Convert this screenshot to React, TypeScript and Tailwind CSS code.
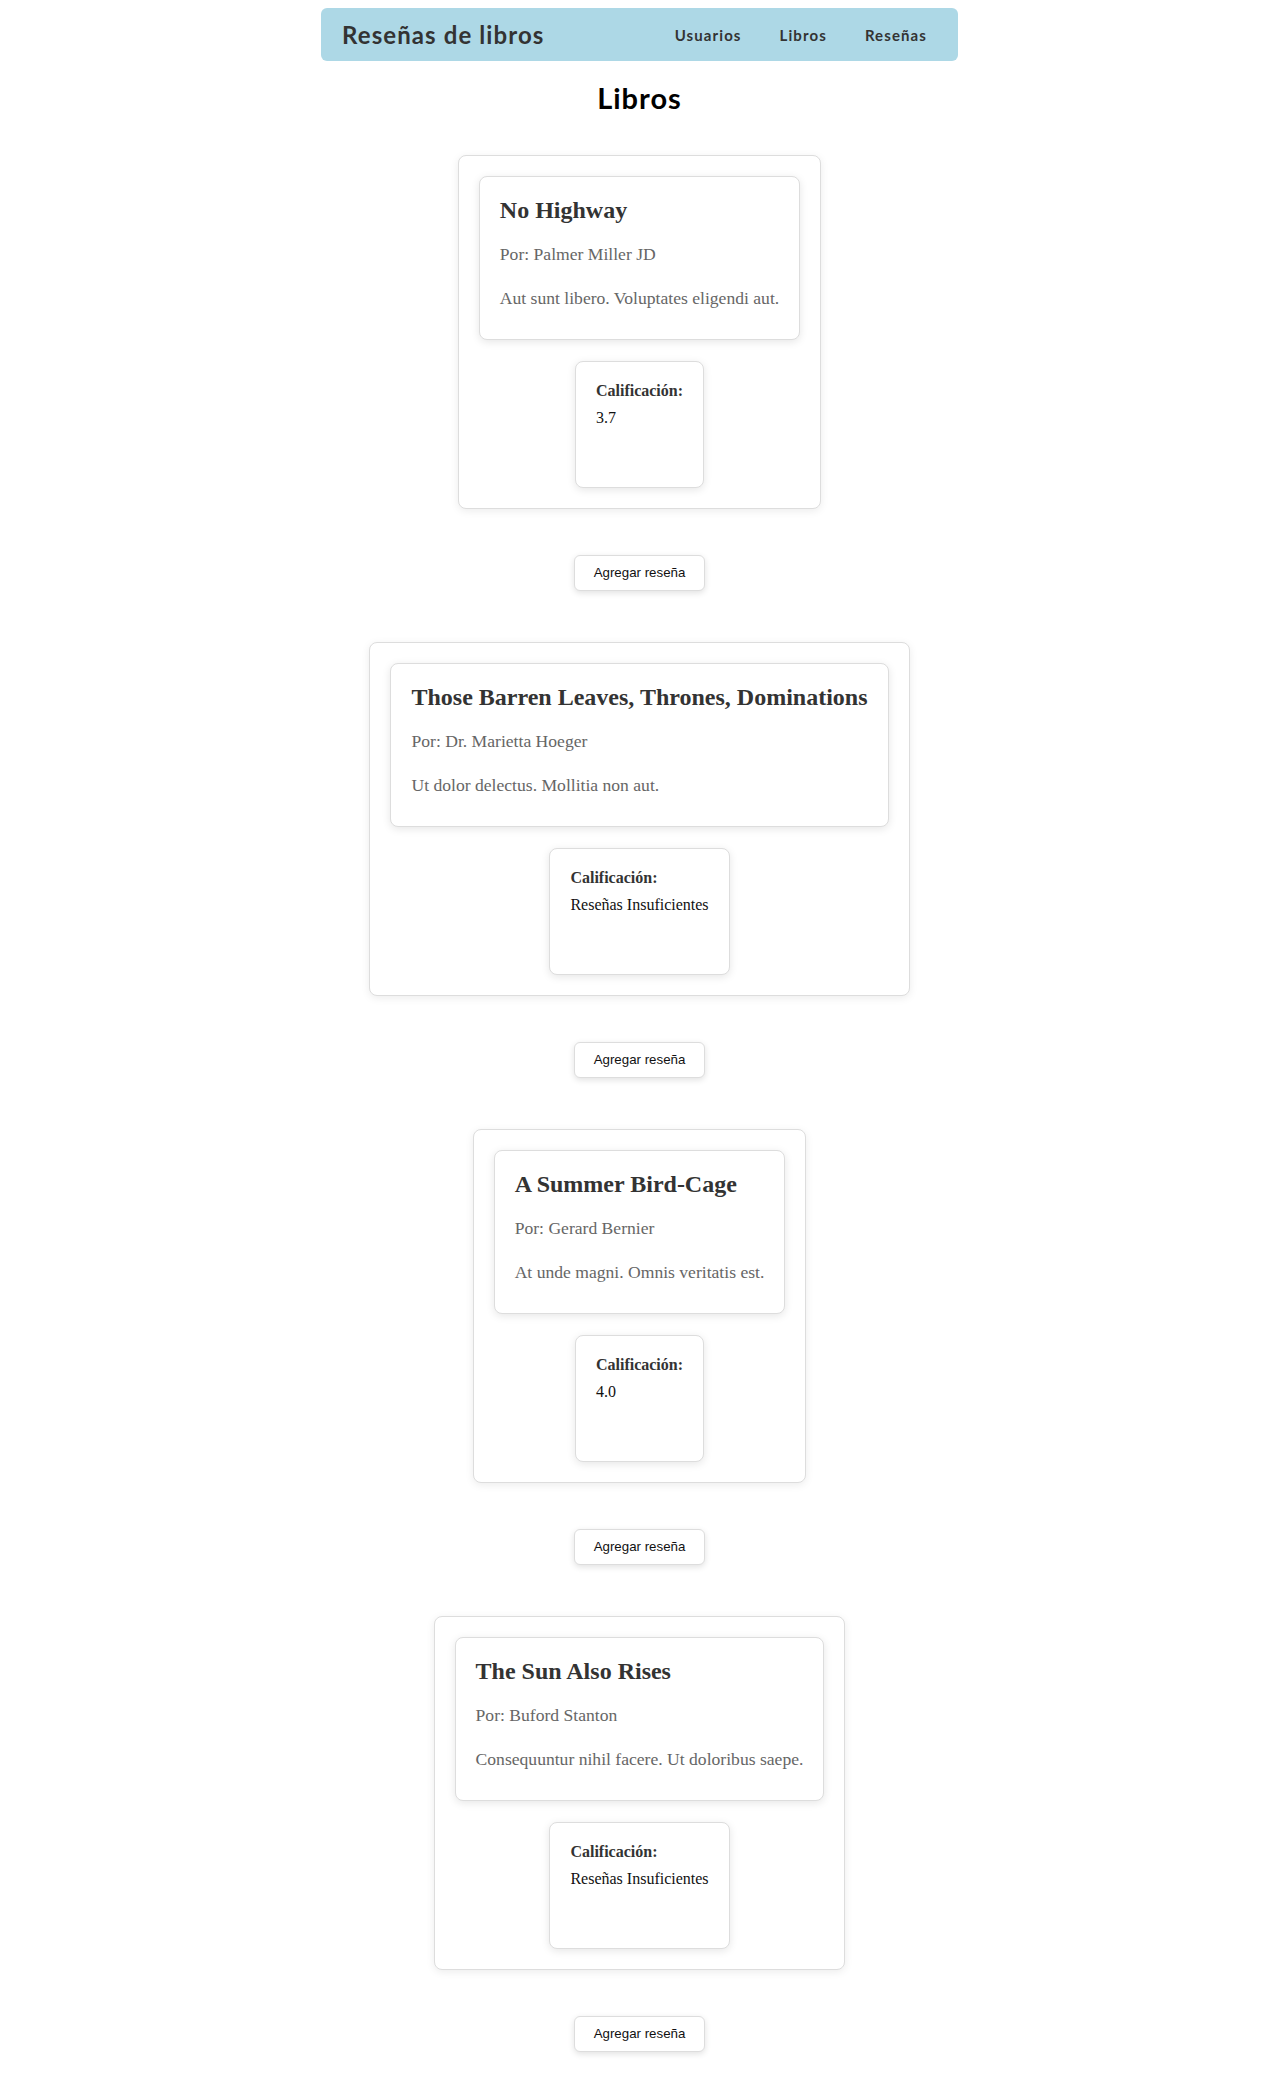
import React from "react";

type Book = {
  title: string;
  author: string;
  description: string;
  rating: string;
};

const books: Book[] = [
  {
    title: "No Highway",
    author: "Palmer Miller JD",
    description: "Aut sunt libero. Voluptates eligendi aut.",
    rating: "3.7",
  },
  {
    title: "Those Barren Leaves, Thrones, Dominations",
    author: "Dr. Marietta Hoeger",
    description: "Ut dolor delectus. Mollitia non aut.",
    rating: "Reseñas Insuficientes",
  },
  {
    title: "A Summer Bird-Cage",
    author: "Gerard Bernier",
    description: "At unde magni. Omnis veritatis est.",
    rating: "4.0",
  },
  {
    title: "The Sun Also Rises",
    author: "Buford Stanton",
    description: "Consequuntur nihil facere. Ut doloribus saepe.",
    rating: "Reseñas Insuficientes",
  },
];

const navFont = { fontFamily: 'Lato, "DejaVu Sans", sans-serif' };

function BookCard({ book }: { book: Book }) {
  return (
    <div className="flex w-fit flex-col items-center rounded-lg border border-[#dddddd] bg-white p-5 shadow-[0_2px_8px_rgba(0,0,0,0.08)]">
      {/* book info */}
      <div className="rounded-lg border border-[#dddddd] bg-white px-[20px] py-[19px] shadow-[0_2px_8px_rgba(0,0,0,0.1)]">
        <h3 className="text-[24px] leading-[28px] font-bold whitespace-nowrap text-[#333333]">{book.title}</h3>
        <p className="mt-5 text-[17.6px] leading-[20px] whitespace-nowrap text-[#666666]">Por: {book.author}</p>
        <p className="mt-6 mb-3 text-[17.6px] leading-[20px] whitespace-nowrap text-[#666666]">{book.description}</p>
      </div>

      {/* rating */}
      <div className="mt-[21px] h-[127px] rounded-lg border border-[#dddddd] bg-white px-5 pt-5 shadow-[0_2px_8px_rgba(0,0,0,0.1)]">
        <h4 className="text-[16px] leading-[18px] font-bold text-[#333333]">Calificación:</h4>
        <p className="mt-[9px] text-[16px] leading-[18px] whitespace-nowrap text-[#111111]">{book.rating}</p>
      </div>
    </div>
  );
}

export default function App() {
  return (
    <div className="min-h-screen bg-white pt-2 pb-[30px]" style={{ fontFamily: '"Liberation Serif", "Times New Roman", serif' }}>
      {/* Navbar */}
      <nav
        className="mx-auto flex h-[53px] w-[637px] items-center justify-between rounded-md bg-[#add8e6] pr-[31px] pl-[21px]"
        style={navFont}
      >
        <span className="text-[24px] font-bold tracking-[1.1px] text-[#333333]">Reseñas de libros</span>
        <div className="flex gap-[38px] pt-[1px] text-[15px] font-bold tracking-[1.1px] text-[#333333]">
          <a href="#">Usuarios</a>
          <a href="#">Libros</a>
          <a href="#">Reseñas</a>
        </div>
      </nav>

      <h1 className="mt-[21px] mb-[41px] text-center text-[29px] leading-[32px] font-bold tracking-[1px] text-black" style={navFont}>
        Libros
      </h1>

      <div className="flex flex-col items-center">
        {books.map((book, i) => (
          <div key={book.title} className={i > 0 ? "mt-[51px] flex flex-col items-center" : "flex flex-col items-center"}>
            <BookCard book={book} />
            <button
              className="mt-[46px] flex h-[36px] items-center rounded-md border border-[#dddddd] bg-white px-[19px] text-[13.3px] text-[#111111] shadow-[0_2px_6px_rgba(0,0,0,0.12)]"
              style={{ fontFamily: '"Liberation Sans", Arial, sans-serif' }}
            >
              Agregar reseña
            </button>
          </div>
        ))}
      </div>
    </div>
  );
}
